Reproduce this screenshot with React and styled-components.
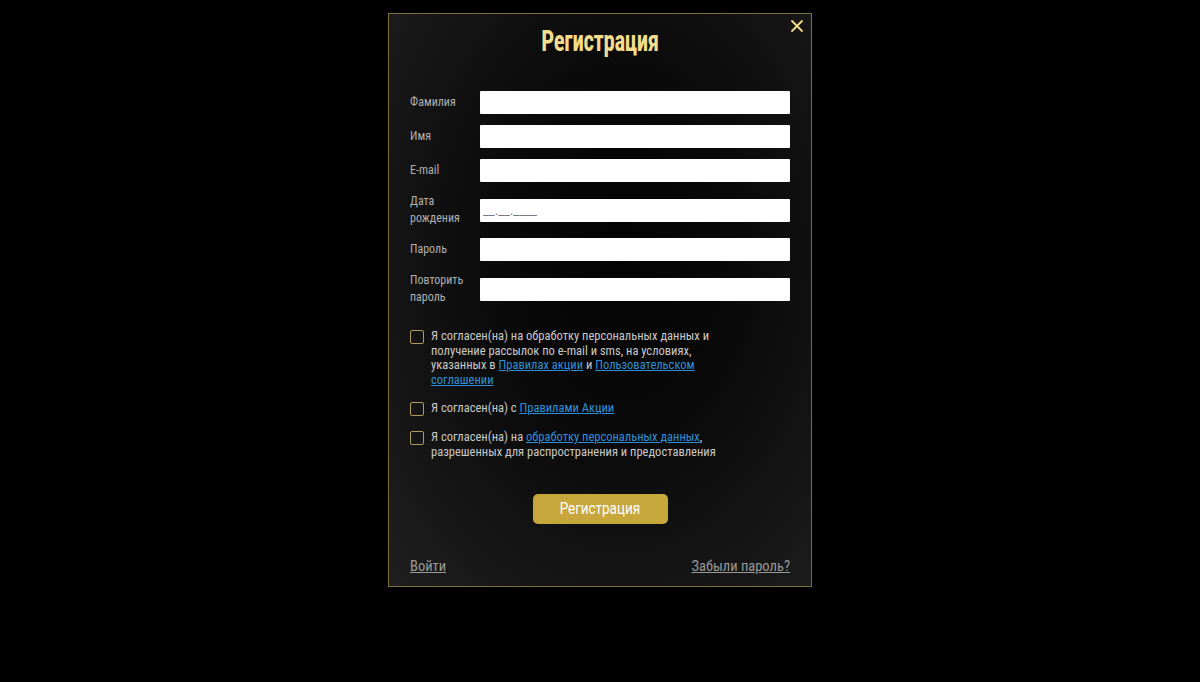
import React from 'react';
import styled, { createGlobalStyle } from 'styled-components';

const GlobalStyle = createGlobalStyle`
	html, body {
		margin: 0;
		padding: 0;
		background: #000;
	}
	body {
		font-family: 'Roboto', 'Liberation Sans', sans-serif;
		font-stretch: condensed;
	}
`;

const Page = styled.div`
	width: 100%;
	min-height: 682px;
	background: #000;
	display: flex;
	justify-content: center;
	padding-top: 13px;
	box-sizing: border-box;
`;

const Modal = styled.div`
	position: relative;
	width: 424px;
	height: 574px;
	box-sizing: border-box;
	border: 1px solid #7d6d36;
	background: radial-gradient(ellipse at 55% 42%, #030303 0%, #0a0a0a 40%, #1f1f1f 100%);
	padding: 10px 21px 0 21px;
	display: flex;
	flex-direction: column;
`;

const CloseButton = styled.button`
	position: absolute;
	top: 4px;
	right: 6px;
	width: 16px;
	height: 16px;
	padding: 0;
	border: none;
	background: none;
	cursor: pointer;
`;

const Title = styled.h1`
	margin: 0;
	text-align: center;
	color: #f3dc8e;
	font-size: 30px;
	font-weight: 700;
	line-height: 34px;
	letter-spacing: -0.5px;
	transform: scaleX(0.76);
`;

const Form = styled.form`
	margin-top: 33px;
	display: flex;
	flex-direction: column;
	gap: 11px;
`;

const Row = styled.div`
	display: flex;
	align-items: center;
	min-height: ${(p) => (p.$tall ? '34px' : '23px')};
`;

const Label = styled.label`
	width: 70px;
	color: #b0b0b0;
	font-size: 12px;
	line-height: 17px;
`;

const Input = styled.input`
	width: 310px;
	height: 23px;
	box-sizing: border-box;
	border: none;
	border-radius: 1px;
	background: #fff;
	padding: 0 3px;
	font-family: inherit;
	font-size: 13px;
	color: #777;
	outline: none;
	&::placeholder {
		color: #777;
	}
`;

const Checks = styled.div`
	margin-top: 23px;
	display: flex;
	flex-direction: column;
	gap: 14px;
`;

const CheckRow = styled.label`
	display: flex;
	align-items: flex-start;
	gap: 7px;
	color: #c9c9c9;
	font-size: 12.5px;
	line-height: 14.6px;
`;

const Box = styled.span`
	flex: none;
	width: 14px;
	height: 14px;
	margin-top: 1px;
	box-sizing: border-box;
	border: 1.5px solid #b09a5c;
	border-radius: 2px;
`;

const CheckText = styled.span`
	max-width: ${(p) => p.$width || 285}px;
`;

const Link = styled.a`
	color: #2f8fd8;
	text-decoration: underline;
`;

const ButtonWrap = styled.div`
	margin-top: 34px;
	display: flex;
	justify-content: center;
`;

const Submit = styled.button`
	width: 135px;
	height: 30px;
	border: none;
	border-radius: 5px;
	background: #c7a63c;
	color: #fff;
	font-family: inherit;
	cursor: pointer;
`;

const SubmitText = styled.span`
	display: inline-block;
	font-size: 16px;
	font-weight: 400;
	transform: scaleX(0.84);
`;

const Footer = styled.div`
	margin-top: 34px;
	display: flex;
	justify-content: space-between;
`;

const FooterLink = styled.a`
	color: #9a9a9a;
	font-size: 14.5px;
	text-decoration: underline;
	cursor: pointer;
`;

const fields = [
	{ label: 'Фамилия' },
	{ label: 'Имя' },
	{ label: 'E-mail' },
	{ label: 'Дата рождения', tall: true, placeholder: '__.__.____' },
	{ label: 'Пароль', type: 'password' },
	{ label: 'Повторить пароль', tall: true, type: 'password' },
];

export default function App() {
	return (
		<>
			<GlobalStyle />
			<Page>
				<Modal>
					<CloseButton aria-label='Закрыть'>
						<svg width='16' height='16' viewBox='0 0 16 16'>
							<path
								d='M3 3L13 13M13 3L3 13'
								stroke='#f3dc8e'
								strokeWidth='1.8'
								strokeLinecap='round'
							/>
						</svg>
					</CloseButton>
					<Title>Регистрация</Title>
					<Form>
						{fields.map((f) => (
							<Row key={f.label} $tall={f.tall}>
								<Label>{f.label}</Label>
								<Input
									type={f.type || 'text'}
									placeholder={f.placeholder}
								/>
							</Row>
						))}
					</Form>
					<Checks>
						<CheckRow>
							<Box />
							<CheckText>
								Я согласен(на) на обработку персональных данных и
								получение рассылок по e-mail и sms, на условиях,
								указанных в <Link>Правилах акции</Link> и{' '}
								<Link>Пользовательском соглашении</Link>
							</CheckText>
						</CheckRow>
						<CheckRow>
							<Box />
							<CheckText>
								Я согласен(на) с <Link>Правилами Акции</Link>
							</CheckText>
						</CheckRow>
						<CheckRow>
							<Box />
							<CheckText $width={300}>
								Я согласен(на) на{' '}
								<Link>обработку персональных данных</Link>,
								разрешенных для распространения и предоставления
							</CheckText>
						</CheckRow>
					</Checks>
					<ButtonWrap>
						<Submit type='button'>
							<SubmitText>Регистрация</SubmitText>
						</Submit>
					</ButtonWrap>
					<Footer>
						<FooterLink>Войти</FooterLink>
						<FooterLink>Забыли пароль?</FooterLink>
					</Footer>
				</Modal>
			</Page>
		</>
	);
}
